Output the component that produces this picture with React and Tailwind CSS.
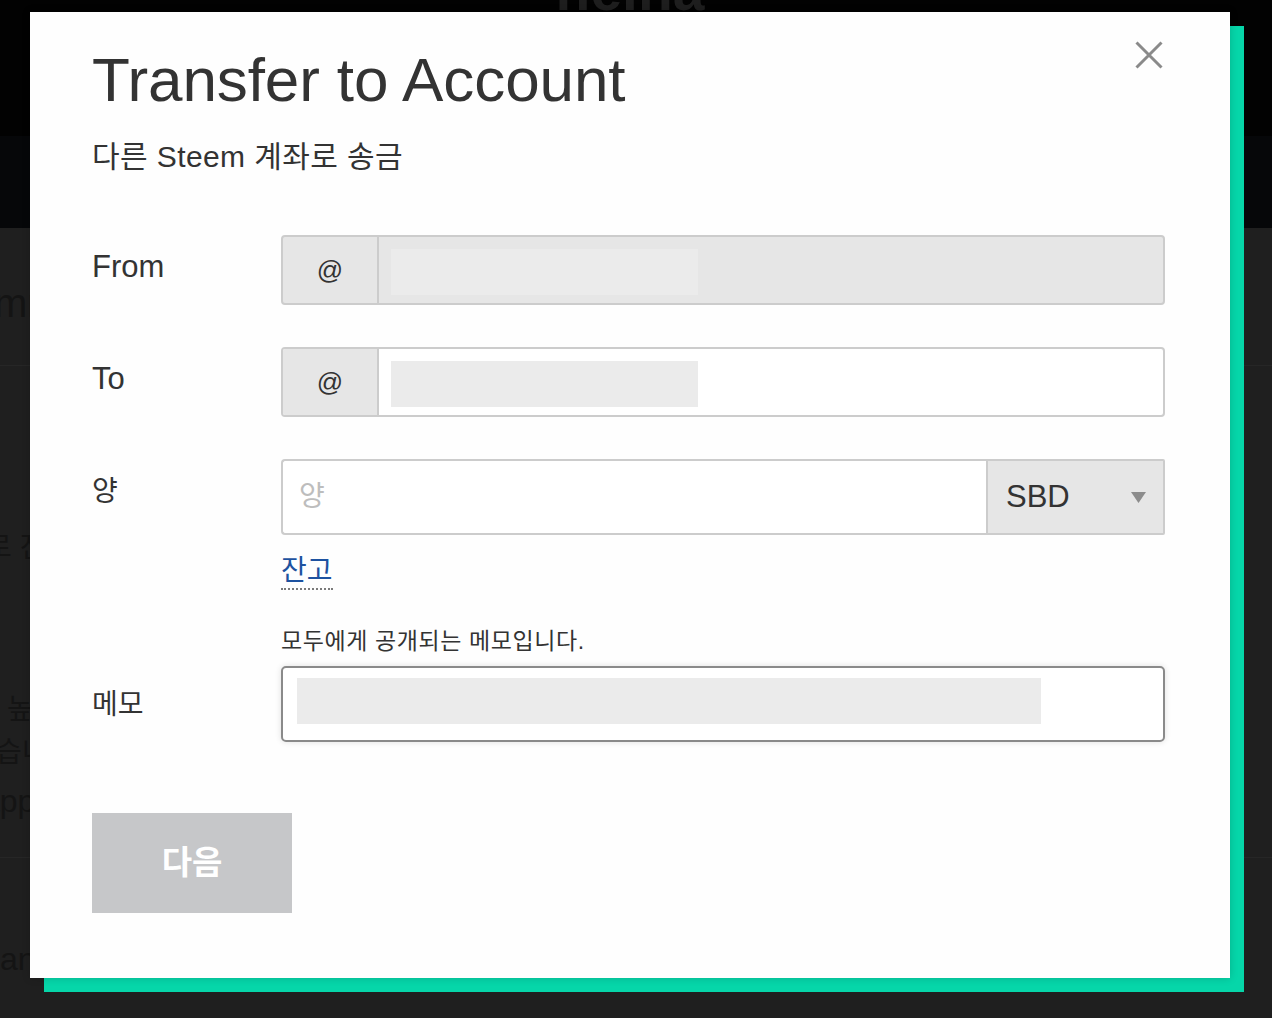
export default function App() {
  return (
    <div className="relative w-[1272px] h-[1018px] overflow-hidden bg-[#1f1f1f] font-['Liberation_Sans','Noto_Sans_CJK_KR',sans-serif]">
      {/* background page */}
      <div className="h-[136px] bg-[#020202] flex justify-center">
        <div className="-mt-[38px] mr-[12px] text-[57px] leading-[56px] font-bold text-[#1e1e1e] whitespace-nowrap">nelna</div>
      </div>
      <div className="h-[92px] bg-[#060709]" />
      <div className="flex flex-col text-[#141414] whitespace-nowrap">
        <div className="mt-[55px] -ml-[6px] text-[40px] leading-[40px]">mnary Content</div>
        <div className="mt-[42px] h-px bg-[#262626]" />
        <div className="mt-[164px] -ml-[14px] text-[28px] leading-[36px]">로 진행합니다</div>
        <div className="mt-[126px] ml-[7px] text-[28px] leading-[36px]">높은 수익</div>
        <div className="mt-[7px] -ml-[4px] text-[28px] leading-[36px]">습니다</div>
        <div className="mt-[12px] -ml-[18px] text-[32px] leading-[36px]">apps</div>
        <div className="mt-[38px] h-px bg-[#262626]" />
        <div className="mt-[83px] text-[32px] leading-[36px]">any</div>
      </div>

      {/* modal */}
      <div className="absolute left-[30px] top-[12px] w-[1200px] h-[966px] bg-[#fefefe] shadow-[0_0_8px_rgba(0,0,0,0.18),14px_14px_0_0_#06d6a9] pt-[37px] pl-[62px] pr-[65px] text-[#333333]">
        <button className="absolute right-[67px] top-[29px] w-[28px] h-[28px]" aria-label="close">
          <svg width="28" height="28" viewBox="0 0 28 28">
            <path d="M1.5 1.5 L26.5 26.5 M26.5 1.5 L1.5 26.5" stroke="#8a8a8a" strokeWidth="3" fill="none" />
          </svg>
        </button>

        <h1 className="text-[62px] leading-[62px] tracking-[-0.1px]">Transfer to Account</h1>
        <p className="mt-[28px] text-[30px] leading-[36px] tracking-[0.4px]">다른 Steem 계좌로 송금</p>

        {/* From */}
        <div className="mt-[60px] flex">
          <div className="w-[189px] pt-[14px] text-[31px] leading-[36px]">From</div>
          <div className="w-[884px] h-[70px] flex rounded-[4px] border-2 border-[#cccccc] bg-[#e6e6e6]">
            <div className="w-[96px] border-r-2 border-[#cccccc] flex items-center justify-center text-[26px]">@</div>
            <div className="flex-1 pl-[12px] pt-[12px]">
              <div className="w-[307px] h-[46px] bg-[#ebebeb]" />
            </div>
          </div>
        </div>

        {/* To */}
        <div className="mt-[42px] flex">
          <div className="w-[189px] pt-[14px] text-[31px] leading-[36px]">To</div>
          <div className="w-[884px] h-[70px] flex rounded-[4px] border-2 border-[#cccccc] bg-white overflow-hidden">
            <div className="w-[96px] border-r-2 border-[#cccccc] bg-[#e6e6e6] flex items-center justify-center text-[26px]">@</div>
            <div className="flex-1 pl-[12px] pt-[12px]">
              <div className="w-[307px] h-[46px] bg-[#ebebeb]" />
            </div>
          </div>
        </div>

        {/* Amount */}
        <div className="mt-[42px] flex">
          <div className="w-[189px] pt-[15px] text-[28px] leading-[36px]">양</div>
          <div className="w-[884px] flex flex-col">
            <div className="flex h-[76px]">
              <div className="w-[705px] flex items-center rounded-l-[4px] border-2 border-r-0 border-[#cccccc] bg-white pl-[16px] text-[28px] text-[#bdbdbd]">양</div>
              <div className="w-[179px] flex items-center justify-between border-2 border-[#cccccc] rounded-r-[2px] bg-[#e6e6e6] pl-[18px] pr-[17px]">
                <span className="text-[31px]">SBD</span>
                <svg width="15" height="11" viewBox="0 0 15 11">
                  <polygon points="0,0 15,0 7.5,11" fill="#8c8c8c" />
                </svg>
              </div>
            </div>
            <div className="mt-[18px]">
              <span className="inline-block text-[28px] leading-[35px] text-[#1d52a0] border-b-2 border-dotted border-[#7a7a7a]">잔고</span>
            </div>
          </div>
        </div>

        {/* Memo */}
        <div className="mt-[36px] flex">
          <div className="w-[189px] pt-[61px] text-[28px] leading-[36px]">메모</div>
          <div className="w-[884px] flex flex-col">
            <p className="text-[23px] leading-[30px] tracking-[0.6px]">모두에게 공개되는 메모입니다.</p>
            <div className="mt-[10px] h-[76px] rounded-[5px] border-2 border-[#8a8a8a] bg-white shadow-[0_0_6px_rgba(0,0,0,0.12)] pl-[14px] pt-[10px]">
              <div className="w-[744px] h-[46px] bg-[#ebebeb]" />
            </div>
          </div>
        </div>

        <button className="mt-[71px] w-[200px] h-[100px] bg-[#c6c7c9] text-white text-[33px] font-bold flex items-center justify-center">다음</button>
      </div>
    </div>
  );
}
